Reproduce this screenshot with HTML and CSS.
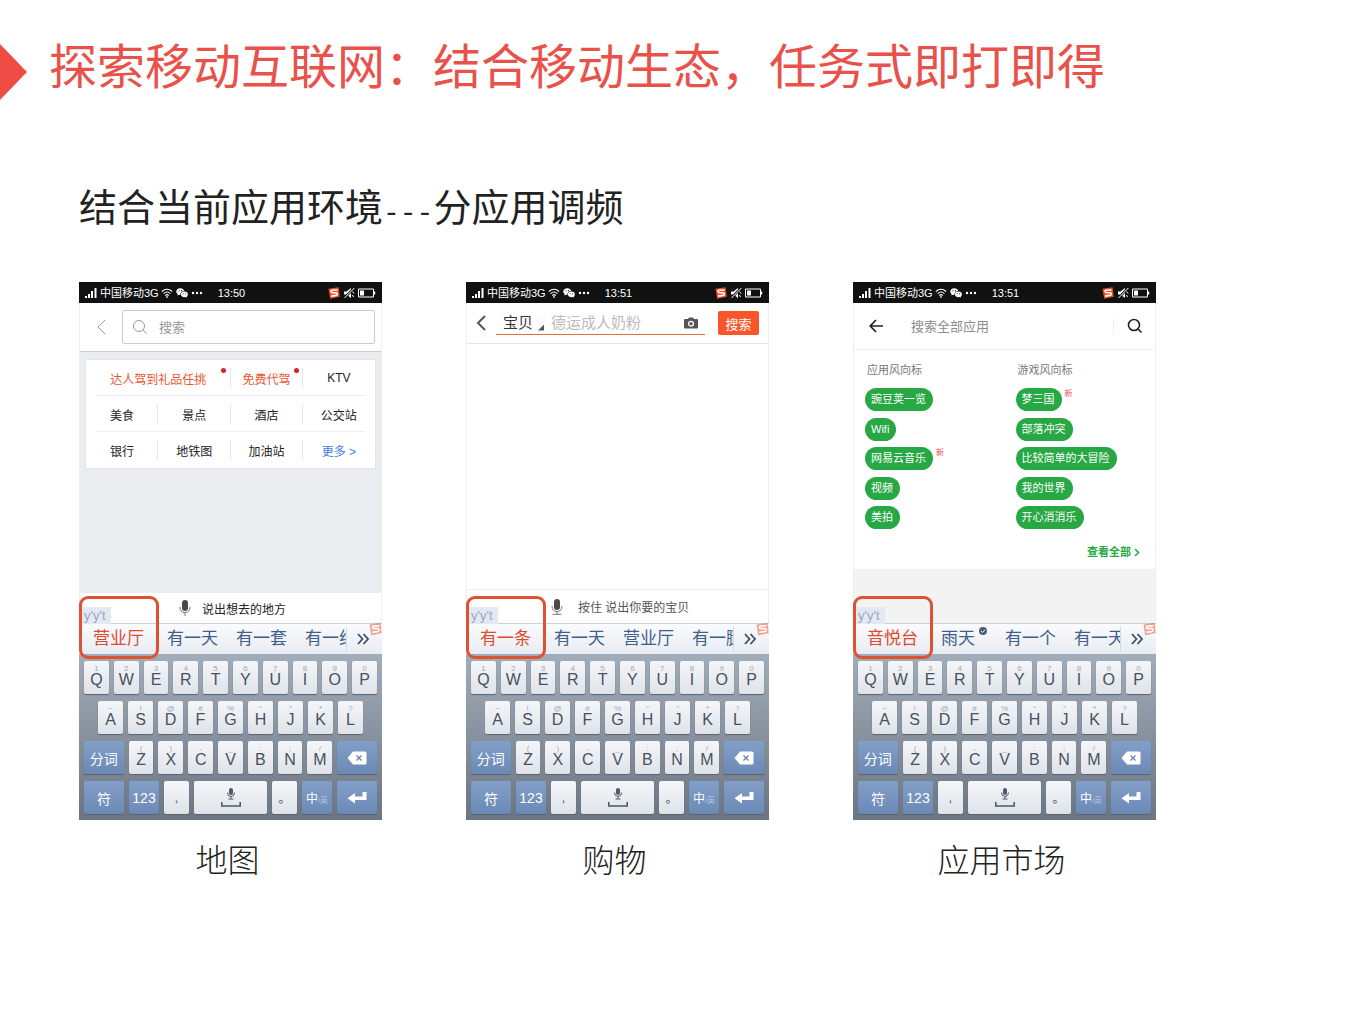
FILE: index.html
```html
<!DOCTYPE html>
<html lang="zh-CN">
<head>
    <meta charset="UTF-8">
    <meta name="viewport" content="width=device-width, initial-scale=1">
    <title>探索移动互联网</title>
    <link rel="stylesheet" href="styles.css">
</head>
<body>

<!-- Shared icons -->
<svg class="sprite" aria-hidden="true">
    <symbol id="i-signal" viewBox="0 0 12 10"><path d="M0 8h2v2H0zM3 6h2v4H3zM6 3h2v7H6zM9.500 0h2v10h-2z" fill="#fff"/></symbol>
    <symbol id="i-wifi" viewBox="0 0 14 12"><path d="M1 4.200Q7-1 13 4.200M3 6.700Q7 3 11 6.700M5 9Q7 7 9 9" fill="none" stroke="#fff" stroke-width="1.300"/><circle cx="7" cy="10.600" r="1" fill="#fff"/></symbol>
    <symbol id="i-wechat" viewBox="0 0 14 12"><path d="M5 .5C2.300.5.3 2.200.3 4.300c0 1.200.7 2.200 1.700 2.900L1.600 9l1.900-1 1.500.2C5 5.500 7 3.800 9.600 3.800 9.200 1.900 7.300.5 5 .5z" fill="#fff"/><ellipse cx="9.800" cy="7.600" rx="4" ry="3.300" fill="#fff"/><path d="M11 10l2 1.500-.4-2.500z" fill="#fff"/><g fill="#111"><circle cx="3.500" cy="3.500" r=".7"/><circle cx="6.500" cy="3.300" r=".7"/><circle cx="8.400" cy="6.800" r=".6"/><circle cx="11.200" cy="6.800" r=".6"/></g></symbol>
    <symbol id="i-dots" viewBox="0 0 12 4"><g fill="#fff"><circle cx="2" cy="2" r="1.200"/><circle cx="6" cy="2" r="1.200"/><circle cx="10" cy="2" r="1.200"/></g></symbol>
    <symbol id="i-sogou" viewBox="0 0 13 13"><path d="M.5 2L11.500.3 12.700 10.500 2.300 12.700z" fill="#ee4b26"/><path d="M10.300 3.300L4.500 3.600C2.800 3.800 3 6 4.600 6.100l4.200.1c1.800.1 1.800 2.600 0 2.900l-5.600.8" fill="none" stroke="#fff" stroke-width="1.700"/></symbol>
    <symbol id="i-mute" viewBox="0 0 12 12"><path d="M1 4.500h2.500L8 1v10L3.500 7.500H1z" fill="#fff"/><path d="M11.500.5L1 11.500" stroke="#111" stroke-width="2.500"/><path d="M11.300 1L1.500 11M9.500 4.500l1.500 2M9 8.500l2 1" stroke="#fff" fill="none"/></symbol>
    <symbol id="i-battery" viewBox="0 0 18 10"><path d="M.5 1h15v8H.5z" fill="none" stroke="#fff"/><path d="M2 2.500h4v5H2z" fill="#fff"/><path d="M16.500 3.500v3" stroke="#fff" stroke-width="1.500"/></symbol>
    <symbol id="i-back" viewBox="0 0 10 16"><path d="M9 1L2 8l7 7" fill="none" stroke="currentColor" stroke-width="var(--line, 1)"/></symbol>
    <symbol id="i-search" viewBox="0 0 16 16"><circle cx="7" cy="7" r="5.500" fill="none" stroke="currentColor" stroke-width="var(--line, 1)"/><path d="M11 11l3.500 3.500" stroke="currentColor" stroke-width="var(--line, 1)"/></symbol>
    <symbol id="i-arrow" viewBox="0 0 14 14"><path d="M14 7H1.500M7 1L1.200 7 7 13" fill="none" stroke="#222" stroke-width="1.700"/></symbol>
    <symbol id="i-camera" viewBox="0 0 14 12"><path d="M1 2h3l1-1.500h4L10 2h3q1 0 1 1v7.500q0 1-1 1H1q-1 0-1-1V3q0-1 1-1z" fill="#555"/><circle cx="7" cy="6.700" r="2.400" fill="none" stroke="#fff" stroke-width="1.300"/></symbol>
    <symbol id="i-mic" viewBox="0 0 12 16"><rect x="3" y="0" width="6" height="11" rx="3" fill="#4a4a4a"/><path d="M1 7q0 5.500 5 5.500T11 7M6 12.500V16" fill="none" stroke="#777"/></symbol>
    <symbol id="i-mic-base" viewBox="0 0 12 16"><rect x="3" y="0" width="6" height="11" rx="3" fill="#4a4a4a"/><path d="M1 7q0 5.500 5 5.500T11 7M6 12.500V15M1.500 15.300h9" fill="none" stroke="#777"/></symbol>
    <symbol id="i-more" viewBox="0 0 12 12"><path d="M1 1l4.500 5L1 11M6.500 1L11 6l-4.500 5" fill="none" stroke="#3c5068" stroke-width="1.800"/></symbol>
    <symbol id="i-next" viewBox="0 0 6 8"><path d="M1 .5L4.500 4 1 7.500" fill="none" stroke="#27a844" stroke-width="1.500"/></symbol>
    <symbol id="i-check" viewBox="0 0 8 8"><circle cx="4" cy="4" r="4" fill="#4a6076"/><path d="M2 4l1.500 1.500L6 2.800" fill="none" stroke="#fff"/></symbol>
    <symbol id="i-delete" viewBox="0 0 20 14"><path d="M6 .5h12q1.500 0 1.500 1.500v10q0 1.500-1.500 1.500H6L.5 7z" fill="#fff"/><path d="M9.500 4.500l5 5M14.500 4.500l-5 5" stroke="#6480a8" stroke-width="1.200"/></symbol>
    <symbol id="i-enter" viewBox="0 0 20 14"><path d="M19.500 1v8H8v3.500L.5 7.300 8 2v3.500h7.500V1z" fill="#fff"/></symbol>
    <symbol id="i-space" viewBox="0 0 20 20"><rect x="8" y="0" width="4" height="7" rx="2" fill="#4e5a68"/><path d="M6.500 4.500q0 4 3.500 4t3.500-4M10 8.500V11M7.500 11h5" fill="none" stroke="#4e5a68"/><path d="M.8 14v4h18.400v-4" fill="none" stroke="#4e5a68" stroke-width="1.600"/></symbol>
</svg>

<header class="slide-title">
    <span class="marker"></span>
    <h1>探索移动互联网：结合移动生态，任务式即打即得</h1>
</header>

<main>
    <h2>结合当前应用环境<span class="dashes">---</span>分应用调频</h2>

    <div class="phones">
        <figure>
            <div class="phone" data-time="13:50" data-words="营业厅,有一天,有一套,有一线">
                <div class="app map">
                    <div class="map-head">
                        <button type="button" class="plain" aria-label="返回"><svg class="back"><use href="#i-back"/></svg></button>
                        <div class="map-search">
                            <svg class="glass"><use href="#i-search"/></svg>
                            <input type="text" placeholder="搜索" aria-label="搜索">
                        </div>
                    </div>
                    <nav class="shortcuts">
                        <a href="#" class="wide hot"><span class="dot-wide">达人驾到礼品任挑</span></a>
                        <a href="#" class="hot"><span class="dot-near">免费代驾</span></a>
                        <a href="#">KTV</a>
                        <a href="#">美食</a>
                        <a href="#">景点</a>
                        <a href="#">酒店</a>
                        <a href="#">公交站</a>
                        <a href="#">银行</a>
                        <a href="#">地铁图</a>
                        <a href="#">加油站</a>
                        <a href="#" class="more">更多 &gt;</a>
                    </nav>
                    <div class="voice map-voice">
                        <svg><use href="#i-mic"/></svg>
                        <span>说出想去的地方</span>
                    </div>
                </div>
            </div>
            <figcaption>地图</figcaption>
        </figure>

        <figure>
            <div class="phone" data-time="13:51" data-words="有一条,有一天,营业厅,有一腿">
                <div class="app shop">
                    <div class="shop-head">
                        <button type="button" class="plain" aria-label="返回"><svg class="back"><use href="#i-back"/></svg></button>
                        <div class="shop-search">
                            <select aria-label="分类"><option>宝贝</option></select>
                            <span class="corner"></span>
                            <input type="text" placeholder="德运成人奶粉" aria-label="搜索宝贝">
                            <svg class="camera"><use href="#i-camera"/></svg>
                        </div>
                        <button type="button" class="go">搜索</button>
                    </div>
                    <div class="voice shop-voice">
                        <svg><use href="#i-mic-base"/></svg>
                        <span>按住 说出你要的宝贝</span>
                    </div>
                </div>
            </div>
            <figcaption>购物</figcaption>
        </figure>

        <figure>
            <div class="phone" data-time="13:51" data-words="音悦台,雨天*,有一个,有一天">
                <div class="app market">
                    <div class="market-head">
                        <button type="button" class="plain" aria-label="返回"><svg class="arrow"><use href="#i-arrow"/></svg></button>
                        <input type="text" placeholder="搜索全部应用" aria-label="搜索全部应用">
                        <button type="button" class="plain find" aria-label="搜索"><svg class="glass"><use href="#i-search"/></svg></button>
                    </div>
                    <div class="trends">
                        <section>
                            <h3>应用风向标</h3>
                            <ul>
                                <li><a href="#">豌豆荚一览</a></li>
                                <li><a href="#">Wifi</a></li>
                                <li><a href="#">网易云音乐</a><sup>新</sup></li>
                                <li><a href="#">视频</a></li>
                                <li><a href="#">美拍</a></li>
                            </ul>
                        </section>
                        <section>
                            <h3>游戏风向标</h3>
                            <ul>
                                <li><a href="#">梦三国</a><sup>新</sup></li>
                                <li><a href="#">部落冲突</a></li>
                                <li><a href="#">比较简单的大冒险</a></li>
                                <li><a href="#">我的世界</a></li>
                                <li><a href="#">开心消消乐</a></li>
                            </ul>
                        </section>
                        <a href="#" class="all">查看全部<svg><use href="#i-next"/></svg></a>
                    </div>
                </div>
            </div>
            <figcaption>应用市场</figcaption>
        </figure>
    </div>
</main>

<script>
    var letterRows = [
        ['Q1', 'W2', 'E3', 'R4', 'T5', 'Y6', 'U7', 'I8', 'O9', 'P0'],
        ['A~', 'S!', 'D@', 'F#', 'G%', 'H“', 'J”', 'K*', 'L?'],
        ['Z(', 'X)', 'C-', 'V_', 'B:', 'N;', 'M/']
    ];

    function icon(name) {
        return '<svg class="' + name + '"><use href="#i-' + name + '"/></svg>';
    }

    function letters(row) {
        return row.map(function(k) {
            return '<button type="button" class="key letter"><small>' + k[1] + '</small>' + k[0] + '</button>';
        }).join('');
    }

    function keyboard() {
        return '<div class="keyboard">' +
            '<div class="row">' + letters(letterRows[0]) + '</div>' +
            '<div class="row inset">' + letters(letterRows[1]) + '</div>' +
            '<div class="row">' +
                '<button type="button" class="key blue big">分词</button>' +
                letters(letterRows[2]) +
                '<button type="button" class="key blue big" aria-label="删除">' + icon('delete') + '</button>' +
            '</div>' +
            '<div class="row">' +
                '<button type="button" class="key blue big">符</button>' +
                '<button type="button" class="key blue mid">123</button>' +
                '<button type="button" class="key mark">,</button>' +
                '<button type="button" class="key wide-key" aria-label="空格">' + icon('space') + '</button>' +
                '<button type="button" class="key mark">。</button>' +
                '<button type="button" class="key blue mid lang"><span>中<i>/英</i></span></button>' +
                '<button type="button" class="key blue big" aria-label="回车">' + icon('enter') + '</button>' +
            '</div>' +
        '</div>';
    }

    function candidates(words) {
        var list = words.split(',').map(function(w) {
            var marked = w.indexOf('*') > 0;
            return '<button type="button">' + w.replace('*', '') + (marked ? icon('check') : '') + '</button>';
        }).join('');
        return '<div class="candidates"><span class="typed">y\'y\'t</span>' +
            '<div class="words">' + list + '</div>' +
            '<button type="button" class="expand" aria-label="更多候选">' + icon('more') + '</button>' +
            '<svg class="brand"><use href="#i-sogou"/></svg>' +
            '<span class="focus"></span></div>';
    }

    function statusBar(time) {
        return '<div class="status">' + icon('signal') + '<span>中国移动3G</span>' +
            icon('wifi') + icon('wechat') + icon('dots') +
            '<time>' + time + '</time>' +
            icon('sogou') + icon('mute') + icon('battery') + '</div>';
    }

    document.querySelectorAll('.phone').forEach(function(phone) {
        phone.insertAdjacentHTML('afterbegin', statusBar(phone.dataset.time));
        phone.insertAdjacentHTML('beforeend', candidates(phone.dataset.words) + keyboard());
    });
</script>

</body>
</html>
```
FILE: styles.css
```css
* {
    box-sizing: border-box;
}
body {
    margin: 0;
    background: #fff;
    color: #222;
    font-family: "Liberation Sans", "Noto Sans CJK SC", sans-serif;
}
button, input, select {
    font-family: inherit;
    margin: 0;
    padding: 0;
    border: 0;
    background: none;
    color: inherit;
}
input {
    min-width: 0;
    flex: 1;
    outline: none;
}
a {
    color: inherit;
    text-decoration: none;
}
svg {
    display: block;
    flex: none;
}
.sprite {
    position: absolute;
    width: 0;
    height: 0;
}

/* Slide headings */
.slide-title {
    display: flex;
    align-items: flex-end;
    gap: 22px;
    padding-top: 38px;
}
.marker {
    flex: none;
    width: 27px;
    height: 56px;
    background: #f04c46;
    clip-path: polygon(0 0, 100% 50%, 0 100%);
}
h1 {
    margin: 0 0 2px;
    color: #e8524a;
    font-size: 48px;
    line-height: 60px;
    font-weight: 400;
}
main {
    padding: 80px 79px 40px;
}
h2 {
    margin: 0 0 40px;
    font-size: 38px;
    line-height: 56px;
    font-weight: 400;
}
.dashes {
    font-family: "Liberation Mono", monospace;
    font-size: 28px;
}
.phones {
    display: grid;
    grid-template-columns: repeat(3, minmax(0, 303px));
    gap: 84px;
}
figure {
    margin: 0;
}
figcaption {
    padding: 18px 6px 0 0;
    text-align: center;
    font-size: 32px;
    line-height: 46px;
    font-weight: 300;
}

/* Phone shell */
.phone {
    display: flex;
    flex-direction: column;
    min-height: 538px;
}
.status {
    display: flex;
    align-items: center;
    height: 21px;
    padding: 0 6px;
    background: #111;
    color: #fff;
    font-size: 11px;
    line-height: 16px;
}
.status svg {
    width: 12px;
    height: 12px;
    margin-right: 3px;
}
.status span {
    margin-right: 2px;
    white-space: nowrap;
}
.status time {
    margin: 0 auto 0 12px;
}
.status .signal {
    height: 10px;
}
.status .battery {
    width: 18px;
    margin-right: 0;
}
.app {
    display: flex;
    flex-direction: column;
    flex: 1;
    border: solid #eee;
    border-width: 0 1px;
}
.plain {
    flex: none;
}
.back {
    width: 10px;
    height: 16px;
}
.glass {
    width: 16px;
    height: 16px;
}
.voice {
    display: flex;
    align-items: center;
    gap: 11px;
    margin-top: auto;
    background: #fff;
    font-size: 12px;
}
.voice svg {
    width: 12px;
    height: 16px;
}

/* Map */
.map {
    background: #ebecf0;
}
.map-head {
    display: flex;
    align-items: center;
    gap: 16px;
    height: 49px;
    padding: 0 6px 0 16px;
    background: #fff;
    border-bottom: 1px solid #ccc;
    color: #999;
}
.map-search {
    display: flex;
    flex: 1;
    align-items: center;
    gap: 11px;
    height: 34px;
    padding-left: 9px;
    border: 1px solid #ccc;
    border-radius: 2px;
}
.map-search input {
    font-size: 13px;
}
.map-search input::placeholder {
    color: #999;
}
.shortcuts {
    display: grid;
    grid-template-columns: repeat(4, 1fr);
    margin: 7px 5px;
    background: #fff;
    border: 1px solid #e2e3e7;
    font-size: 12px;
}
.shortcuts a {
    display: flex;
    align-items: center;
    justify-content: center;
    height: 36px;
    background:
        linear-gradient(#e6e6e6, #e6e6e6) right center / 1px 20px no-repeat,
        linear-gradient(#eee, #eee) center bottom / 100% 1px no-repeat;
}
.shortcuts a:nth-child(4n+3) {
    background: linear-gradient(#eee, #eee) left bottom / 62px 1px no-repeat;
}
.shortcuts a:nth-child(4n) {
    background:
        linear-gradient(#e6e6e6, #e6e6e6) right center / 1px 20px no-repeat,
        linear-gradient(#eee, #eee) right bottom / 62px 1px no-repeat;
}
.shortcuts a:nth-child(n+8) {
    background: linear-gradient(#e6e6e6, #e6e6e6) right center / 1px 20px no-repeat;
}
.shortcuts .wide {
    grid-column: span 2;
    background:
        linear-gradient(#e6e6e6, #e6e6e6) right center / 1px 20px no-repeat,
        linear-gradient(#eee, #eee) right bottom / 134px 1px no-repeat;
}
.shortcuts .more {
    color: #3f7de0;
    background: none !important;
}
.shortcuts .hot {
    color: #e8562f;
}
.hot span {
    position: relative;
}
.hot span::after {
    content: "";
    position: absolute;
    top: -2px;
    right: -8px;
    width: 5px;
    height: 5px;
    border-radius: 50%;
    background: #d8212b;
}
.hot .dot-wide::after {
    right: -20px;
}
.map-voice {
    height: 30px;
    padding-left: 99px;
}

/* Shopping */
.shop {
    background: #fff;
}
.shop-head {
    display: flex;
    align-items: center;
    height: 41px;
    padding: 0 9px;
    border-bottom: 1px solid #e6e6e6;
    color: #555;
    --line: 2;
}
.shop-search {
    display: flex;
    flex: 1;
    align-items: center;
    height: 24px;
    min-width: 0;
    margin: 0 13px 0 10px;
    padding: 0 7px;
    border-bottom: 1px solid #e0713f;
}
.shop-search select {
    appearance: none;
    width: 30px;
    color: #333;
    font-size: 15px;
}
.corner {
    width: 6px;
    height: 6px;
    margin: 10px 7px 0 5px;
    background: #555;
    clip-path: polygon(100% 0, 100% 100%, 0 100%);
}
.shop-search input {
    font-size: 15px;
}
.shop-search input::placeholder {
    color: #bbb;
}
.camera {
    width: 14px;
    height: 12px;
}
.go {
    width: 41px;
    height: 24px;
    border-radius: 2px;
    background: #f9552a;
    color: #fff;
    font-size: 13px;
}
.shop-voice {
    height: 34px;
    padding-left: 84px;
    border-top: 1px solid #eee;
    gap: 15px;
    color: #555;
}

/* App market */
.market {
    background: #f3f3f3;
}
.market-head {
    display: flex;
    align-items: center;
    gap: 28px;
    height: 47px;
    padding: 0 12px 0 15px;
    background: #fff;
    border-bottom: 1px solid #f2f2f2;
}
.market-head input {
    font-size: 13px;
}
.market-head input::placeholder {
    color: #8c8c8c;
}
.arrow {
    width: 14px;
    height: 14px;
}
.find {
    padding-left: 13px;
    border-left: 1px solid #eee;
    color: #222;
    --line: 1.600;
}
.trends {
    display: grid;
    grid-template-columns: 1fr 1fr;
    padding: 12px 0 8px;
    background: #fff;
    font-size: 11px;
}
.trends section {
    padding-left: 11px;
}
.trends h3 {
    margin: 0 0 10px 2px;
    color: #777;
    font-size: 11px;
    line-height: 16px;
    font-weight: 400;
}
.trends ul {
    display: flex;
    flex-direction: column;
    justify-content: space-between;
    height: 141px;
    margin: 0;
    padding: 0;
    list-style: none;
}
.trends li {
    display: flex;
    gap: 3px;
}
.trends li a {
    padding: 0 7px 0 6px;
    border-radius: 12px;
    background: #27a844;
    color: #fff;
    line-height: 23px;
}
.trends sup {
    color: #f0534e;
    font-size: 8px;
    line-height: 12px;
}
.trends .all {
    display: flex;
    grid-column: 2;
    justify-content: flex-end;
    align-items: center;
    gap: 3px;
    margin-top: 14px;
    padding-right: 15px;
    color: #27a844;
    font-weight: 700;
    line-height: 18px;
}
.all svg {
    width: 6px;
    height: 9px;
}

/* Candidate bar */
.candidates {
    position: relative;
    display: flex;
    align-items: center;
    height: 31px;
    padding-left: 14px;
    background: linear-gradient(#fafbfd, #e8ecf2);
    border-top: 1px solid #cdd2da;
}
.words {
    display: flex;
    flex: 1;
    gap: 18px;
    min-width: 0;
    overflow: hidden;
    border-right: 1px solid #d5dae2;
    color: #3f5f8a;
}
.words button {
    display: flex;
    flex: none;
    font-size: 17px;
    line-height: 24px;
}
.words button:first-child {
    margin-right: 5px;
    color: #dd4a30;
}
.words svg {
    width: 8px;
    height: 8px;
    margin-left: 4px;
}
.expand {
    padding: 0 13px 0 10px;
}
.expand svg {
    width: 12px;
    height: 12px;
}
.brand {
    position: absolute;
    top: -3px;
    right: 0;
    width: 13px;
    height: 16px;
    opacity: 0.5;
}
.typed {
    position: absolute;
    left: 1px;
    bottom: 30px;
    padding: 0 5px 0 4px;
    background: #e4e8f2;
    color: #9aa5c0;
    font-size: 13px;
    line-height: 17px;
}
.focus {
    position: absolute;
    left: 0;
    bottom: -5px;
    width: 80px;
    height: 63px;
    border: 3px solid #dd5230;
    border-radius: 9px;
}

/* Keyboard */
.keyboard {
    display: flex;
    flex-direction: column;
    gap: 7px;
    padding: 7px 5px 6px;
    background: linear-gradient(#a2adba, #6c7682);
}
.row {
    display: flex;
    gap: 5px;
}
.inset {
    padding: 0 14px;
}
.key {
    display: flex;
    flex: 25 0 0;
    flex-direction: column;
    align-items: center;
    justify-content: center;
    min-width: 0;
    height: 33px;
    border-radius: 2px;
    background: linear-gradient(#f4f6f9, #dfe3e9);
    box-shadow: 0 1px 1px #59636f;
    color: #47525f;
    font-size: 16px;
}
.letter {
    padding-bottom: 4px;
    line-height: 14px;
}
.key small {
    color: #a3a9b1;
    font-size: 8px;
    line-height: 8px;
}
.key.blue {
    background: linear-gradient(#829fc8, #6b89b5);
    color: #fff;
    font-size: 14px;
}
.key.big {
    flex-grow: 40;
}
.key.mid {
    flex-grow: 30;
}
.key.wide-key {
    flex-grow: 73;
}
.key.mark {
    font-size: 12px;
}
.key.lang {
    font-size: 12px;
}
.lang i {
    color: #b4c6e0;
    font-size: 8px;
    font-style: normal;
}
.key svg {
    width: 20px;
    height: 14px;
}
.key .space {
    height: 20px;
}
```
